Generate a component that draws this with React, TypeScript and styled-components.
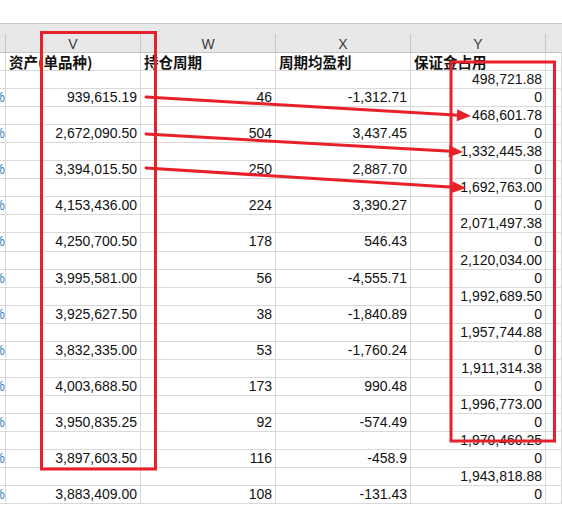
import React from "react";
import styled, { createGlobalStyle } from "styled-components";

const Global = createGlobalStyle`
  html, body { margin: 0; padding: 0; background: #ffffff; overflow: hidden; }
  #root { width: 562px; height: 505px; }
`;

const COLS = "6px 135px 135px 135px 135px 1fr";
const GRID = "#d9d9d9";
const ROW_H = 18.05;

const Page = styled.div`
  position: relative;
  width: 562px;
  height: 505px;
  overflow: hidden;
  background: #fff;
  font-family: "Liberation Sans", Arial, sans-serif;
`;

const TopArea = styled.div`
  height: 23px;
  background: #ffffff;
`;

const ColHeader = styled.div`
  display: flex;
  flex-direction: column;
  background: #e8e8e8;
  border-top: 1px solid #c9c9c9;
  border-bottom: 1px solid #c4c4c4;
`;

const HeaderStrip = styled.div`
  height: 10px;
`;

const LetterRow = styled.div`
  display: grid;
  grid-template-columns: ${COLS};
  height: 18px;
`;

const LetterCell = styled.div`
  box-sizing: border-box;
  border-right: 1px solid #c6c6c6;
  display: flex;
  align-items: center;
  justify-content: center;
  font-family: "Liberation Sans", Arial, sans-serif;
  font-size: 14px;
  line-height: 16px;
  color: #3c3c3c;
  padding-top: 1px;
  &:last-child { border-right: none; }
`;

const Body = styled.div`
  display: flex;
  flex-direction: column;
`;

const Row = styled.div`
  display: grid;
  grid-template-columns: ${COLS};
  height: ${ROW_H}px;
`;

const Cell = styled.div<{ $left?: boolean; $title?: boolean }>`
  box-sizing: border-box;
  border-right: 1px solid ${GRID};
  border-bottom: 1px solid ${GRID};
  display: flex;
  align-items: center;
  justify-content: ${(p) => (p.$left ? "flex-start" : "flex-end")};
  padding: ${(p) => (p.$left ? "0 0 0 3px" : "0 3px 0 0")};
  overflow: ${(p) => (p.$title ? "visible" : "hidden")};
  white-space: nowrap;
  font-family: ${(p) =>
    p.$title
      ? `"Noto Sans CJK SC", "Noto Sans", sans-serif`
      : `"Liberation Sans", Arial, sans-serif`};
  font-size: ${(p) => (p.$title ? "14.5px" : "14px")};
  font-weight: ${(p) => (p.$title ? 700 : 400)};
  color: #111111;
  line-height: 17px;
`;

const PctCell = styled.div`
  box-sizing: border-box;
  border-right: 1px solid ${GRID};
  border-bottom: 1px solid ${GRID};
  display: flex;
  align-items: center;
  justify-content: flex-end;
  overflow: hidden;
  white-space: nowrap;
  font-family: "Liberation Sans", Arial, sans-serif;
  font-size: 14px;
  color: #3f7fc6;
  line-height: 17px;
`;

const Overlay = styled.svg`
  position: absolute;
  left: 0;
  top: 0;
  width: 562px;
  height: 505px;
  pointer-events: none;
`;

type R = { pct?: boolean; v?: string; w?: string; x?: string; y?: string };

const rows: R[] = [
  { y: "498,721.88" },
  { pct: true, v: "939,615.19", w: "46", x: "-1,312.71", y: "0" },
  { y: "468,601.78" },
  { pct: true, v: "2,672,090.50", w: "504", x: "3,437.45", y: "0" },
  { y: "1,332,445.38" },
  { pct: true, v: "3,394,015.50", w: "250", x: "2,887.70", y: "0" },
  { y: "1,692,763.00" },
  { pct: true, v: "4,153,436.00", w: "224", x: "3,390.27", y: "0" },
  { y: "2,071,497.38" },
  { pct: true, v: "4,250,700.50", w: "178", x: "546.43", y: "0" },
  { y: "2,120,034.00" },
  { pct: true, v: "3,995,581.00", w: "56", x: "-4,555.71", y: "0" },
  { y: "1,992,689.50" },
  { pct: true, v: "3,925,627.50", w: "38", x: "-1,840.89", y: "0" },
  { y: "1,957,744.88" },
  { pct: true, v: "3,832,335.00", w: "53", x: "-1,760.24", y: "0" },
  { y: "1,911,314.38" },
  { pct: true, v: "4,003,688.50", w: "173", x: "990.48", y: "0" },
  { y: "1,996,773.00" },
  { pct: true, v: "3,950,835.25", w: "92", x: "-574.49", y: "0" },
  { y: "1,970,460.25" },
  { pct: true, v: "3,897,603.50", w: "116", x: "-458.9", y: "0" },
  { y: "1,943,818.88" },
  { pct: true, v: "3,883,409.00", w: "108", x: "-131.43", y: "0" },
];

const RED = "#e8202a";

function Arrow({ x1, y1, x2, y2 }: { x1: number; y1: number; x2: number; y2: number }) {
  const dx = x2 - x1;
  const dy = y2 - y1;
  const len = Math.hypot(dx, dy);
  const ux = dx / len;
  const uy = dy / len;
  const hl = 14;
  const hw = 6;
  const bx = x2 - ux * hl;
  const by = y2 - uy * hl;
  const px = -uy;
  const py = ux;
  const pts = `${x2},${y2} ${bx + px * hw},${by + py * hw} ${bx - px * hw},${by - py * hw}`;
  return (
    <g>
      <line x1={x1} y1={y1} x2={bx + ux * 2} y2={by + uy * 2} stroke={RED} strokeWidth={3} strokeLinecap="round" />
      <polygon points={pts} fill={RED} />
    </g>
  );
}

export default function App() {
  return (
    <>
      <Global />
      <Page>
        <TopArea />
        <ColHeader>
          <HeaderStrip />
          <LetterRow>
            <LetterCell />
            <LetterCell>V</LetterCell>
            <LetterCell>W</LetterCell>
            <LetterCell>X</LetterCell>
            <LetterCell>Y</LetterCell>
            <LetterCell />
          </LetterRow>
        </ColHeader>
        <Body>
          <Row>
            <Cell />
            <Cell $left $title>资产(单品种)</Cell>
            <Cell $left $title>持仓周期</Cell>
            <Cell $left $title>周期均盈利</Cell>
            <Cell $left $title>保证金占用</Cell>
            <Cell />
          </Row>
          {rows.map((r, i) => (
            <Row key={i}>
              {r.pct ? <PctCell>%</PctCell> : <Cell />}
              <Cell>{r.v}</Cell>
              <Cell>{r.w}</Cell>
              <Cell>{r.x}</Cell>
              <Cell>{r.y}</Cell>
              <Cell />
            </Row>
          ))}
        </Body>
        <Overlay viewBox="0 0 562 505">
          <rect x={41.5} y={32.5} width={114} height={436.5} fill="none" stroke={RED} strokeWidth={3} />
          <rect x={451} y={62} width={103.5} height={379} fill="none" stroke={RED} strokeWidth={3} />
          <Arrow x1={146} y1={97} x2={471} y2={116} />
          <Arrow x1={146} y1={134} x2={463} y2={152} />
          <Arrow x1={146} y1={168} x2={466} y2={188} />
        </Overlay>
      </Page>
    </>
  );
}
